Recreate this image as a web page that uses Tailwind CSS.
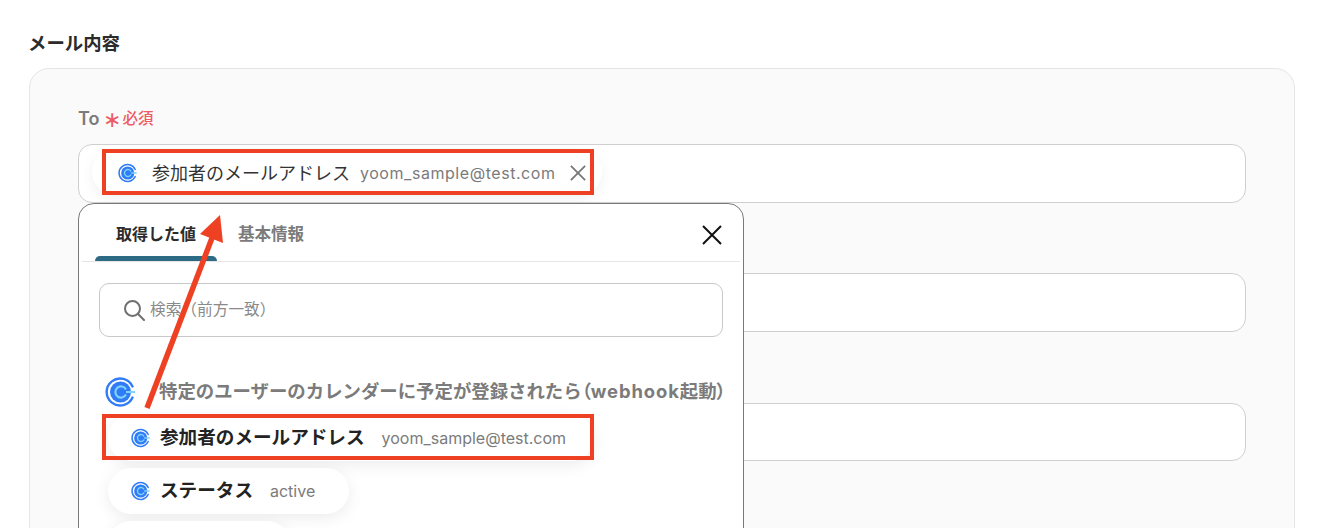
<!DOCTYPE html>
<html lang="ja">
<head>
  <meta charset="UTF-8">
  <title>メール内容</title>
  <script src="https://cdn.jsdelivr.net/npm/@tailwindcss/browser@4"></script>
</head>
<body class="relative h-[528px] w-[1338px] overflow-hidden bg-white font-['Inter','Noto_Sans_CJK_JP',sans-serif] text-[#333]">
  <svg class="hidden">
    <symbol id="cal" viewBox="0 0 32 32">
      <path d="M27.5 10.5A13.5 13.5 0 1 0 27.5 21.5" fill="none" stroke="#2f7cf6" stroke-width="2.4" stroke-linecap="round"/>
      <circle cx="15.5" cy="16" r="10.5" fill="#2f7cf6"/>
      <path d="M21 13.5A5.6 5.6 0 1 0 21 18.5M21 16H30" fill="none" stroke="#7fd3f7" stroke-width="2.2"/>
    </symbol>
  </svg>

  <div class="pt-[30px] pr-[43px] pl-[28px]">
    <h2 class="text-[18.4px] leading-[26px] font-semibold text-[#2b2b2b]">メール内容</h2>
    <div class="mt-[12px] ml-[1px] h-[600px] rounded-[20px] border border-[#e5e5e5] bg-[#fafafa] px-[48px] pt-[37px]">
      <div class="flex h-[24px] items-center gap-[4px] text-[18px] font-semibold text-[#7b7b7b]">
        To
        <span class="mt-[1px] flex items-center gap-[1px] text-[15.5px] font-medium text-[#ee5b65]"><span class="text-[22px] leading-none font-normal">∗</span>必須</span>
      </div>
      <div class="mt-[14px] h-[59px] rounded-[14px] border border-[#cfcfcf] bg-white"></div>
      <div class="mt-[70px] h-[59px] rounded-[14px] border border-[#cfcfcf] bg-white"></div>
      <div class="mt-[71px] h-[58px] rounded-[14px] border border-[#cfcfcf] bg-white"></div>
    </div>
  </div>

  <!-- value chip in the To field -->
  <div class="absolute top-[149px] left-[92px] flex h-[46px] w-[510px] items-center rounded-full bg-white pt-[2px] pl-[26px] shadow-[0_4px_14px_rgba(0,0,0,0.06)]">
    <svg class="h-[20px] w-[20px]"><use href="#cal"/></svg>
    <span class="ml-[14px] text-[18px] text-[#333]">参加者のメールアドレス</span>
    <span class="ml-[10px] text-[16px] tracking-[0.55px] text-[#7b7b7b]">yoom_sample@test.com</span>
    <svg class="ml-[14px] h-[16px] w-[16px]" viewBox="0 0 18 18" fill="none" stroke="#777" stroke-width="2"><path d="M1 1L17 17M17 1L1 17"/></svg>
  </div>

  <!-- popover -->
  <div class="absolute top-[203px] left-[78px] h-[400px] w-[666px] rounded-[16px] border border-[#77797c] bg-white">
    <div class="relative mx-[3px] flex h-[58px] border-b border-[#e6e6e6] pl-[13px]">
      <div class="relative w-[122px] pt-[19px] text-center text-[16px] leading-[22px] font-bold text-[#2b2b2b]">
        取得した値
        <span class="absolute bottom-0 left-0 h-[5px] w-full rounded-t-[6px] bg-[#2d6b85]"></span>
      </div>
      <div class="w-[87px] pt-[19px] pl-[21px] text-center text-[16.5px] leading-[22px] font-semibold whitespace-nowrap text-[#7b7b7b]">基本情報</div>
      <svg class="absolute top-[21px] right-[18px] h-[20px] w-[20px]" viewBox="0 0 20 20" fill="none" stroke="#111" stroke-width="2"><path d="M1 1L19 19M19 1L1 19"/></svg>
    </div>
    <div class="mx-[20px] mt-[21px] flex h-[54px] items-center rounded-[10px] border border-[#c8c8c8] pl-[23px]">
      <svg class="h-[22px] w-[22px]" viewBox="0 0 22 22" fill="none" stroke="#6f6f6f" stroke-width="2"><circle cx="9.5" cy="9.5" r="7.5"/><path d="M15 15L21 21" stroke-linecap="round"/></svg>
      <span class="ml-[5px] text-[15.7px] text-[#8a8a8a]">検索（前方一致）</span>
    </div>
    <div class="mt-[37px] flex items-center pl-[26px]">
      <svg class="h-[32px] w-[32px]"><use href="#cal"/></svg>
      <span class="ml-[22px] pb-[2px] text-[18.4px] leading-[34px] font-bold whitespace-nowrap text-[#7b7b7b]">特定のユーザーのカレンダーに予定が登録されたら<span class="[font-feature-settings:'palt']">（</span><span class="tracking-[0.9px]">webhook</span>起動<span class="[font-feature-settings:'palt']">）</span></span>
    </div>
    <div class="mt-[5px] flex flex-col gap-[7px] pl-[29px]">
      <div class="flex h-[46px] w-fit items-center rounded-full bg-white pr-[28px] pl-[23px] shadow-[0_4px_16px_rgba(0,0,0,0.08)]">
        <svg class="h-[20px] w-[20px]"><use href="#cal"/></svg>
        <span class="ml-[9px] text-[18.6px] font-bold text-[#222]">参加者のメールアドレス</span>
        <span class="ml-[17px] text-[16px] text-[#7b7b7b]">yoom_sample@test.com</span>
      </div>
      <div class="flex h-[46px] w-[241px] items-center rounded-full bg-white pl-[23px] shadow-[0_4px_16px_rgba(0,0,0,0.08)]">
        <svg class="h-[20px] w-[20px]"><use href="#cal"/></svg>
        <span class="ml-[9px] text-[18.6px] font-bold text-[#222]">ステータス</span>
        <span class="ml-[17px] text-[16px] text-[#7b7b7b]">active</span>
      </div>
      <div class="h-[46px] w-[182px] rounded-full bg-white shadow-[0_4px_16px_rgba(0,0,0,0.08)]"></div>
    </div>
  </div>

  <!-- annotations -->
  <div class="absolute top-[149px] left-[102px] h-[46px] w-[492px] border-4 border-[#ee4123]"></div>
  <div class="absolute top-[414px] left-[102px] h-[46px] w-[492px] border-4 border-[#ee4123]"></div>
  <svg class="absolute top-[200px] left-[130px] h-[220px] w-[110px]" viewBox="0 0 110 220">
    <path d="M17 208L82 38" stroke="#ee4123" stroke-width="5.5"/>
    <path d="M90 15L70 34L93 43Z" fill="#ee4123"/>
  </svg>
</body>
</html>
